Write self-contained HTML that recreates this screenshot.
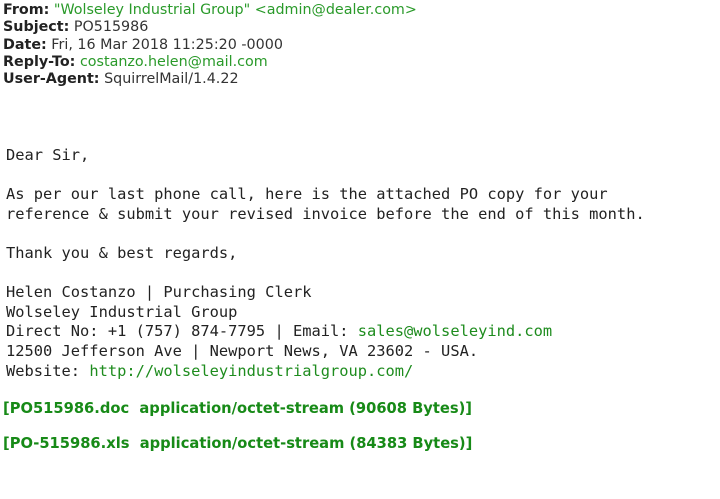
<!DOCTYPE html>
<html><head><style>
body{margin:0;background:#fff;width:720px;height:499px;overflow:hidden;position:relative}
.h{position:absolute;left:3px;font-family:"DejaVu Sans",sans-serif;font-size:14.3px;color:#333;white-space:pre;line-height:17.3px}
.h b{color:#222}
.g{color:#2a9a2a}
pre{position:absolute;left:6px;top:146px;margin:0;font-family:"DejaVu Sans Mono",monospace;font-size:15.38px;line-height:19.6px;color:#222}
pre a{color:#1e8c1e;text-decoration:none}
.att{position:absolute;left:3px;font-family:"DejaVu Sans",sans-serif;font-size:14.7px;font-weight:bold;color:#178a17;white-space:pre}
</style></head><body>
<div class="h" style="top:2px"><b>From:</b> <span class="g">"Wolseley Industrial Group" &lt;admin@dealer.com&gt;</span>
<b>Subject:</b> PO515986
<b>Date:</b> Fri, 16 Mar 2018 11:25:20 -0000
<b>Reply-To:</b> <span class="g">costanzo.helen@mail.com</span>
<b>User-Agent:</b> SquirrelMail/1.4.22</div>
<pre>Dear Sir,

As per our last phone call, here is the attached PO copy for your
reference &amp; submit your revised invoice before the end of this month.

Thank you &amp; best regards,

Helen Costanzo | Purchasing Clerk
Wolseley Industrial Group
Direct No: +1 (757) 874-7795 | Email: <a>sales@wolseleyind.com</a>
12500 Jefferson Ave | Newport News, VA 23602 - USA.
Website: <a>http://wolseleyindustrialgroup.com/</a></pre>
<div class="att" style="top:400px">[PO515986.doc  application/octet-stream (90608 Bytes)]</div>
<div class="att" style="top:435px">[PO-515986.xls  application/octet-stream (84383 Bytes)]</div>
</body></html>
